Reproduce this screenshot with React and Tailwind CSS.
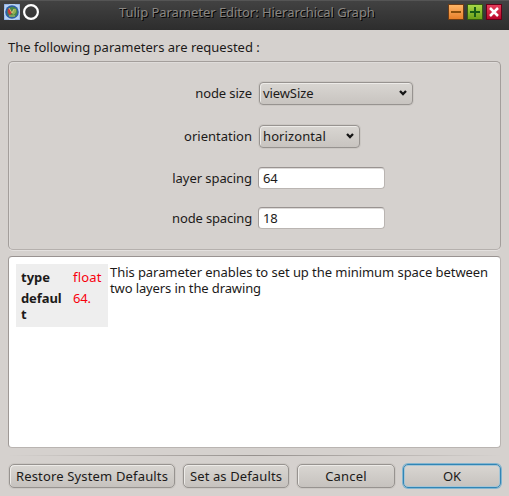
import React from "react";

function Caret() {
  return (
    <svg width="8" height="6" viewBox="0 0 8 6" className="shrink-0">
      <path d="M1 1L4 4L7 1" fill="none" stroke="#151515" strokeWidth="2.3" />
    </svg>
  );
}

function Combo({ className, children }) {
  return (
    <div className={"flex h-[23px] items-center justify-between rounded-[4px] border border-[#979390] bg-linear-to-b from-[#d9d6d2] to-[#c8c4c0] pb-px pl-[3px] pr-[5px] shadow-[inset_1px_1px_0_#edebe8,0_0_0_1px_#cbc7c3] " + className}>
      {children}
      <Caret />
    </div>
  );
}

function Field({ children }) {
  return (
    <div className="flex h-[22px] w-[127px] items-center rounded-[4px] border border-[#bab5b2] border-t-[#999391] border-l-[#a19b99] bg-white pl-1 shadow-[inset_0_1px_0_#dedbd9]">
      <span className="tracking-[-0.2px]">{children}</span>
    </div>
  );
}

function Button({ className, children }) {
  return (
    <button className={"flex h-6 items-center justify-center rounded-[5px] border bg-linear-to-b from-[#d9d6d2] to-[#c6c2be] pb-px whitespace-nowrap " + className}>
      {children}
    </button>
  );
}

const plain = "border-[#979390] shadow-[inset_1px_1px_0_#edebe8,0_0_0_1px_#cbc7c3]";

function WindowButton({ className, children }) {
  return (
    <div className={"h-4 w-4 border " + className}>
      <svg width="14" height="14" viewBox="0 0 14 14">{children}</svg>
    </div>
  );
}

export default function App() {
  return (
    <div className="flex h-[496px] w-[509px] flex-col overflow-hidden bg-[#d5d1ce] font-['Noto_Sans',sans-serif] text-[13px] leading-4 text-[#1c1a19]">
      <header className="flex h-[30px] shrink-0 items-start border-t border-[#555] bg-linear-to-b from-[#424242] to-[#2d2d2d] pt-[3px] pl-1 pr-[7px]">
        <svg width="16" height="16" viewBox="0 0 16 16">
          <rect width="16" height="16" fill="#b9d3f2" />
          <path d="M0 5V0H5M11 0H16V5M0 11V16H5M11 16H16V11" fill="none" stroke="#7b9de0" />
          <circle cx="8" cy="8" r="6.8" fill="#2b5ca8" />
          <circle cx="8.3" cy="8" r="5.2" fill="#49864a" />
          <path d="M4 5Q6 3 8 9L6 11Q3 9 4 5" fill="#c63c3c" />
          <path d="M8 9Q9 4 12 5Q13 9 9 11Z" fill="#91af54" />
          <path d="M5 4L8 9L10 5M5 12H11" stroke="#d5cf83" strokeWidth=".8" fill="none" />
        </svg>
        <svg width="17" height="17" viewBox="0 0 17 17" className="ml-[3px]">
          <circle cx="8" cy="8" r="6.9" fill="none" stroke="#fff" strokeWidth="2.2" />
        </svg>
        <h1 className="ml-[79px] flex-1 whitespace-nowrap tracking-[-0.04px] text-[#898682] [text-shadow:1px_1px_0_#000]">Tulip Parameter Editor: Hierarchical Graph</h1>
        <div className="flex gap-[3px]">
          <WindowButton className="border-[#6d3c15] bg-linear-to-b from-[#ffb565] to-[#e77f28]">
            <path d="M2 7H12" stroke="#8a4e0c" strokeWidth="2" />
          </WindowButton>
          <WindowButton className="border-[#345a12] bg-linear-to-b from-[#a7d846] to-[#6d9f19]">
            <path d="M2 7H12M7 2V12" stroke="#185a16" strokeWidth="2" />
          </WindowButton>
          <WindowButton className="border-[#680018] bg-linear-to-b from-[#e63c5b] to-[#b90029]">
            <path d="M3 3L11 11M11 3L3 11" stroke="#fff" strokeWidth="2.5" />
          </WindowButton>
        </div>
      </header>

      <main className="flex flex-col px-2">
        <p className="mt-[9px] whitespace-nowrap">The following parameters are requested :</p>
        <section className="mt-[6px] flex h-[189px] flex-col rounded-[5px] border border-[#a39e9b] border-b-[#b5b0ad] pt-5 shadow-[inset_1px_1px_0_#dfdcda,0_1px_0_#e3e0de]">
          <div className="flex h-[23px] items-center">
            <label className="mr-[7px] w-[243px] pb-px text-right tracking-[-0.1px]">node size</label>
            <Combo className="w-[154px]"><span className="tracking-[-0.1px]">viewSize</span></Combo>
          </div>
          <div className="mt-5 flex h-[23px] items-center">
            <label className="mr-[7px] w-[243px] pb-px text-right">orientation</label>
            <Combo className="w-[101px]"><span className="tracking-[0.1px]">horizontal</span></Combo>
          </div>
          <div className="mt-[19px] flex h-[22px] items-center">
            <label className="mr-[6px] w-[243px] text-right tracking-[-0.06px]">layer spacing</label>
            <Field>64</Field>
          </div>
          <div className="mt-[18px] flex h-[22px] items-center">
            <label className="mr-[6px] w-[243px] text-right tracking-[-0.15px]">node spacing</label>
            <Field>18</Field>
          </div>
        </section>
        <section className="mt-[6px] flex h-[192px] items-start rounded-[4px] border border-[#b9b4b1] border-t-[#999391] border-l-[#9f9996] bg-white pt-[7px] pl-[7px]">
          <div className="grid h-[63px] w-[92px] shrink-0 grid-cols-[52px_40px] grid-rows-[21px_32px] bg-[#eee] pt-[5px] pl-[5px]">
            <b>type</b><span className="tracking-[0.2px] text-[#f8000c]">float</span>
            <b className="tracking-[-0.1px]">defaul<br />t</b><span className="tracking-[-0.2px] text-[#f8000c]">64.</span>
          </div>
          <p className="ml-[2px] whitespace-nowrap tracking-[-0.06px]">This parameter enables to set up the minimum space between<br /><span className="tracking-[-0.12px]">two layers in the drawing</span></p>
        </section>
        <div className="mt-[7px] h-px bg-linear-to-r from-transparent via-[#96918e] to-transparent" />
        <footer className="mt-2 flex gap-2 pl-px">
          <Button className={"w-[166px] tracking-[0.16px] " + plain}>Restore System Defaults</Button>
          <Button className={"w-[106px] tracking-[0.12px] " + plain}>Set as Defaults</Button>
          <Button className={"w-[98px] tracking-[0.2px] " + plain}>Cancel</Button>
          <Button className="w-[98px] border-[#3185b5] shadow-[inset_0_0_0_1px_#a5c5d6,0_0_0_1px_#82b5d0]">OK</Button>
        </footer>
      </main>
    </div>
  );
}
